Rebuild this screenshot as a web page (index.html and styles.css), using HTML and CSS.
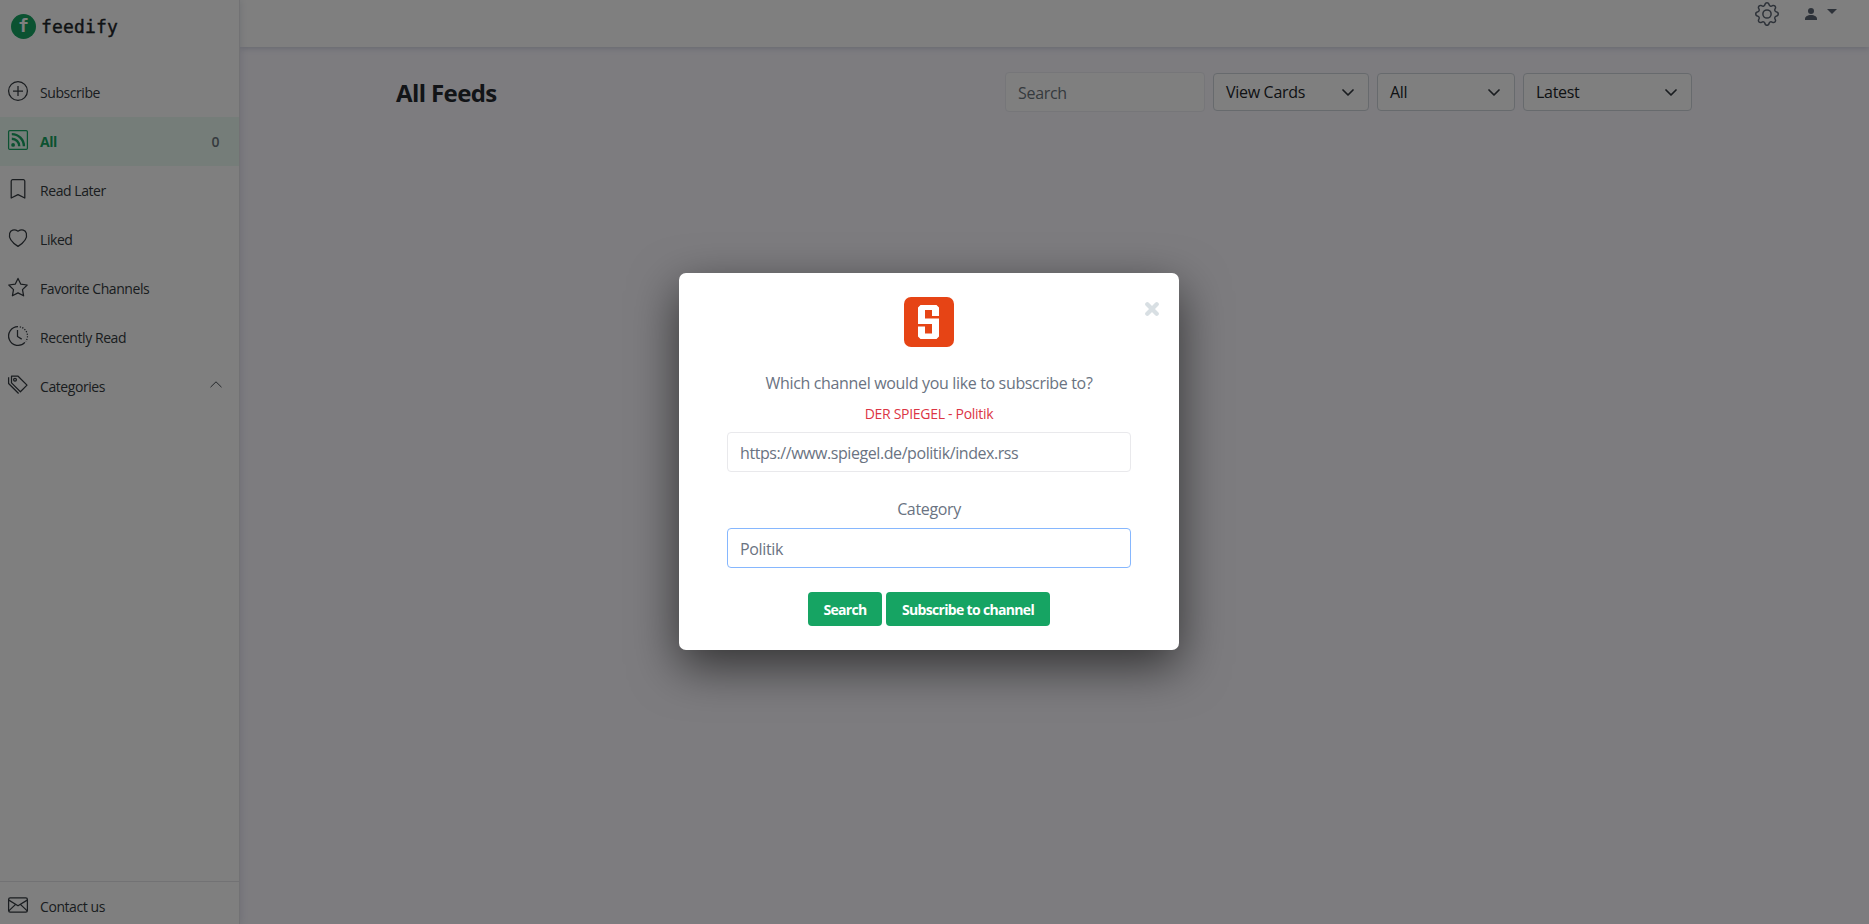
FILE: index.html
```html
<!DOCTYPE html>
<html lang="en">
<head>
<meta charset="utf-8">
<title>feedify</title>
<link rel="stylesheet" href="styles.css">
</head>
<body>
<div class="app">
  <aside class="sidebar">
    <div class="brand"><span class="brand-mark">f</span><span class="brand-name">feedify</span></div>
    <nav class="menu">
      <a class="item"><svg class="icon" viewBox="0 0 20 20"><circle cx="10" cy="10" r="9.4"/><path d="M10 5v10M5 10h10"/></svg><span class="label">Subscribe</span></a>
      <a class="item active"><svg class="icon" viewBox="0 0 20 20"><rect x=".6" y=".6" width="18.8" height="18.8" rx="1.2"/><circle class="solid" cx="5.1" cy="14.9" r="1.9"/><path class="wave" d="M3.8 8.8a7.4 7.4 0 0 1 7.4 7.4M3.8 4.1a12.1 12.1 0 0 1 12.1 12.1"/></svg><span class="label">All</span><span class="count">0</span></a>
      <a class="item"><svg class="icon" viewBox="0 0 20 20"><path d="M3.2 19V2.200A1.5 1.5 0 0 1 4.700.700h10.600a1.5 1.5 0 0 1 1.500 1.500V19L10 15.600z"/></svg><span class="label">Read Later</span></a>
      <a class="item"><svg class="icon" viewBox="0 0 20 20"><path d="M10 18.400C-4.500 9.200 2.200-2 10 3.200 17.800-2 24.500 9.200 10 18.400z"/></svg><span class="label">Liked</span></a>
      <a class="item"><svg class="icon" viewBox="0 0 20 20"><path d="M10 1.400l2.700 5.700 6.500.9-4.700 4.600 1.100 6.200-5.600-2.900-5.600 2.900 1.100-6.200L.8 8l6.500-.9z"/></svg><span class="label">Favorite Channels</span></a>
      <a class="item"><svg class="icon" viewBox="0 0 20 20"><path d="M10 .6a9.4 9.4 0 1 0 6.900 15.800M9.500 4v6.500l4.200 2.600"/><path class="dots" d="M11.800.8a9.4 9.4 0 0 1 6 14.600"/></svg><span class="label">Recently Read</span></a>
      <a class="item"><svg class="icon" viewBox="0 0 20 20"><path d="M3.500 1.200h6.600l8.900 8.900-6.600 6.700-8.900-8.900zM.6 2.200v6.300l10 10"/><circle cx="7" cy="4.800" r="1.400"/></svg><span class="label">Categories</span><svg class="chevron" viewBox="0 0 12 7"><path d="M.5 6.200L6 .8l5.500 5.400"/></svg></a>
    </nav>
    <div class="contact">
      <a class="item"><svg class="icon" viewBox="0 0 20 20"><rect x=".6" y="2.900" width="18.800" height="14.200" rx="1.600"/><path d="M.8 5.100L10 10.800l9.200-5.700M.8 15.900l6.800-6.500M19.200 15.900l-6.800-6.500"/></svg><span class="label">Contact us</span></a>
    </div>
  </aside>
  <div class="main">
    <header class="topbar">
      <svg class="gear" viewBox="0 0 16 16"><path d="M8 4.754a3.246 3.246 0 1 0 0 6.492 3.246 3.246 0 0 0 0-6.492zM5.754 8a2.246 2.246 0 1 1 4.492 0 2.246 2.246 0 0 1-4.492 0z"/><path d="M9.796 1.343c-.527-1.79-3.065-1.79-3.592 0l-.094.319a.873.873 0 0 1-1.255.52l-.292-.16c-1.64-.892-3.433.902-2.54 2.541l.159.292a.873.873 0 0 1-.52 1.255l-.319.094c-1.79.527-1.79 3.065 0 3.592l.319.094a.873.873 0 0 1 .52 1.255l-.16.292c-.892 1.64.901 3.434 2.541 2.54l.292-.159a.873.873 0 0 1 1.255.52l.094.319c.527 1.79 3.065 1.79 3.592 0l.094-.319a.873.873 0 0 1 1.255-.52l.292.16c1.64.893 3.434-.902 2.54-2.541l-.159-.292a.873.873 0 0 1 .52-1.255l.319-.094c1.79-.527 1.79-3.065 0-3.592l-.319-.094a.873.873 0 0 1-.52-1.255l.16-.292c.893-1.64-.902-3.433-2.541-2.54l-.292.159a.873.873 0 0 1-1.255-.52l-.094-.319zm-2.633.283c.246-.835 1.428-.835 1.674 0l.094.319a1.873 1.873 0 0 0 2.693 1.115l.291-.16c.764-.415 1.6.42 1.184 1.185l-.159.292a1.873 1.873 0 0 0 1.116 2.692l.318.094c.835.246.835 1.428 0 1.674l-.319.094a1.873 1.873 0 0 0-1.115 2.693l.16.291c.415.764-.42 1.6-1.185 1.184l-.291-.159a1.873 1.873 0 0 0-2.693 1.116l-.094.318c-.246.835-1.428.835-1.674 0l-.094-.319a1.873 1.873 0 0 0-2.692-1.115l-.292.16c-.764.415-1.6-.42-1.184-1.185l.159-.291A1.873 1.873 0 0 0 1.945 8.93l-.319-.094c-.835-.246-.835-1.428 0-1.674l.319-.094A1.873 1.873 0 0 0 3.06 4.377l-.16-.292c-.415-.764.42-1.6 1.185-1.184l.292.159a1.873 1.873 0 0 0 2.692-1.115l.094-.319z"/></svg>
      <svg class="user" viewBox="0 0 12 12"><circle cx="6" cy="3" r="3"/><path d="M0 12v-1.200C0 8.700 2.500 7 6 7s6 1.700 6 3.800V12z"/></svg>
      <span class="caret"></span>
    </header>
    <section class="content">
      <h1 class="title">All Feeds</h1>
      <div class="filters">
        <div class="search">Search</div>
        <div class="select view"><span>View Cards</span><svg class="arrow" viewBox="0 0 12 7"><path d="M1 1l5 5 5-5"/></svg></div>
        <div class="select state"><span>All</span><svg class="arrow" viewBox="0 0 12 7"><path d="M1 1l5 5 5-5"/></svg></div>
        <div class="select sort"><span>Latest</span><svg class="arrow" viewBox="0 0 12 7"><path d="M1 1l5 5 5-5"/></svg></div>
      </div>
    </section>
  </div>
</div>
<div class="overlay">
  <div class="modal">
    <svg class="close" viewBox="0 0 14 14"><path d="M2.300 2.300l9.400 9.400M11.700 2.300l-9.400 9.400"/></svg>
    <svg class="logo" viewBox="0 0 50 50"><rect width="50" height="50" rx="7" fill="#e64415"/><path fill="#fff" d="M16.500 8h16L35 10.500V19h-7v-6h-7v8.500h14v18L32.500 42h-16L14 39.500v-10h7v7h7V27H14V10.500z"/></svg>
    <div class="question">Which channel would you like to subscribe to?</div>
    <div class="found">DER SPIEGEL - Politik</div>
    <div class="field url">https://www.spiegel.de/politik/index.rss</div>
    <div class="category">Category</div>
    <div class="field focused">Politik</div>
    <div class="actions"><button class="btn find">Search</button><button class="btn join">Subscribe to channel</button></div>
  </div>
</div>
</body>
</html>
```
FILE: styles.css
```css
* { box-sizing: border-box; }
body { margin: 0; height: 924px; overflow: hidden; font: 16px/24px "Open Sans", "Noto Sans", sans-serif; color: #212529; background: #faf8ff; }
.app { display: flex; height: 924px; }
.sidebar { width: 240px; flex: none; background: #fff; border-right: 1px solid #e4e4e8; display: flex; flex-direction: column; box-shadow: 0 0 8px rgba(60, 80, 120, .18); z-index: 1; }
.brand { height: 68px; padding: 14px 0 0 11px; display: flex; gap: 5px; }
.brand-mark { width: 25px; height: 25px; border-radius: 50%; background: #16a463; color: #fff; font: bold 18px/24px "DejaVu Sans Mono", monospace; text-align: center; }
.brand-name { font: 18px/25px "DejaVu Sans Mono", monospace; letter-spacing: .15px; color: #212529; -webkit-text-stroke: .4px #212529; }
.item { height: 49px; padding: 0 20px 0 8px; display: flex; align-items: center; font-size: 14px; letter-spacing: -.43px; color: #343a40; }
.label { padding-top: 1px; }
.icon { width: 20px; height: 20px; margin: -3px 12px 0 0; fill: none; stroke: currentColor; stroke-width: 1.25; stroke-linejoin: round; overflow: visible; }
.solid { fill: currentColor; stroke: none; }
.wave { stroke-width: 2.4; }
.dots { stroke-dasharray: 1.3 1.3; }
.active { background: #ebfbf2; color: #16a463; }
.active .label { font-weight: 700; }
.count { margin-left: auto; color: #6c757d; font-weight: 600; }
.chevron { width: 12px; height: 7px; margin: -5px -3px 0 auto; fill: none; stroke: #495057; }
.contact { margin-top: auto; height: 43px; border-top: 1px solid #e4e4e8; }
.main { flex: 1; }
.topbar { height: 47px; background: #fff; box-shadow: 0 1px 6px rgba(60, 80, 120, .25); display: flex; justify-content: flex-end; align-items: flex-start; padding: 2px 32px 0 0; }
.gear { width: 24px; height: 24px; margin-right: 26px; fill: #6c757d; }
.user { width: 12px; height: 12px; margin: 6px 10px 0 0; fill: #6c757d; }
.caret { margin-top: 7px; border: 5px solid transparent; border-top-color: #6c757d; border-bottom: 0; }
.gear, .user { fill: #5b6472; }
.caret { border-top-color: #5b6472; }
.content { display: flex; justify-content: space-between; align-items: flex-start; padding: 25px 177px 0 156px; }
.title { margin: 4px 0 0; font-size: 24px; line-height: 34px; font-weight: 700; letter-spacing: -.6px; color: #24292f; }
.filters { display: flex; align-items: center; gap: 8px; letter-spacing: -.3px; }
.search { width: 200px; height: 40px; background: #fff; border: 1px solid #ececf2; border-radius: 4px; color: #6c757d; padding: 8px 12px; }
.select { height: 38px; background: #fff; border: 1px solid #ced4da; border-radius: 4px; display: flex; align-items: center; justify-content: space-between; padding: 0 14px 0 12px; color: #212529; }
.view { width: 156px; }
.state { width: 138px; }
.sort { width: 169px; }
.arrow { width: 12px; height: 7px; fill: none; stroke: #343a40; stroke-width: 1.7; stroke-linecap: round; stroke-linejoin: round; }
.overlay { position: absolute; inset: 0; z-index: 2; background: rgba(0, 0, 0, .5); display: flex; justify-content: center; padding: 273px 11px 0 0; }
.modal { position: relative; width: 500px; height: 377px; background: #fff; border-radius: 7px; padding: 24px 48px; display: flex; flex-direction: column; align-items: center; color: #6a7382; box-shadow: 0 16px 48px rgba(0, 0, 0, .6); }
.close { position: absolute; top: 29px; right: 20px; width: 14px; height: 14px; stroke: #d8dfe3; stroke-width: 4.3; stroke-linecap: round; }
.logo { width: 50px; height: 50px; flex: none; }
.question { margin-top: 24px; letter-spacing: -.34px; white-space: nowrap; }
.found { margin-top: 8px; font-size: 14px; line-height: 22px; letter-spacing: -.3px; color: #dc3545; }
.field { width: 404px; height: 40px; margin-top: 7px; border: 1px solid #e9e9ec; border-radius: 4px; padding: 8px 12px; letter-spacing: -.35px; }
.url { letter-spacing: -.43px; }
.category { margin-top: 25px; letter-spacing: -.35px; }
.focused { border-color: #86b7fe; }
.actions { display: flex; gap: 4px; margin-top: 24px; }
.btn { height: 34px; border: 0; border-radius: 4px; padding: 1px 0 0; background: #16a463; color: #fff; font: 700 14px/20px "Open Sans", sans-serif; letter-spacing: -.67px; }
.find { width: 74px; }
.join { width: 164px; }
```
